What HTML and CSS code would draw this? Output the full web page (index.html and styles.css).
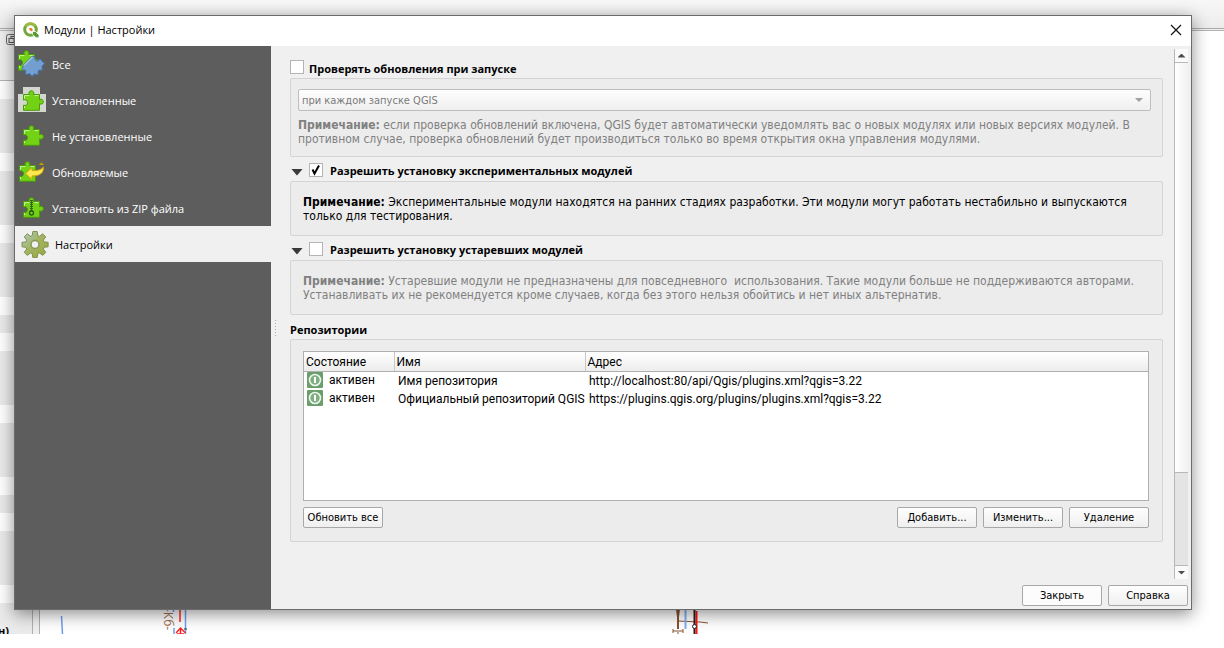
FILE: index.html
```
<!DOCTYPE html>
<html lang="ru">
<head>
<meta charset="utf-8">
<title>Модули | Настройки</title>
<link rel="stylesheet" href="styles.css">
</head>
<body>
<svg class="defs" width="0" height="0" aria-hidden="true">
  <defs>
    <linearGradient id="gear-fill" x1="0" y1="0" x2="1" y2="1">
      <stop offset="0" stop-color="#a9cbd6"/><stop offset=".45" stop-color="#a3b565"/><stop offset="1" stop-color="#96a53c"/>
    </linearGradient>
    <symbol id="puzzle" viewBox="0 0 22 22">
      <path d="M1.500 4.500H7.400C6.300 2.600 7.300.8 9.400.8s3.100 1.800 2 3.700h6.100v5.200c1.900-1.100 3.800-.2 3.800 2s-1.900 3.100-3.800 2v6.600H1.500v-5.200c2 1.100 4-.1 4-2.500s-2-3.600-4-2.500z" fill="#73d216" stroke="#4a9c08"/>
      <path d="M2.500 8.800V5.600h5M12.500 5.600h4M2.500 18v-1.800" fill="none" stroke="#c4f59a"/>
    </symbol>
  </defs>
</svg>

<div class="desktop" aria-hidden="true">
  <div class="desktop-toolbar"></div>
  <div class="desktop-body">
    <div class="side-dock">
      <div class="dock-head">
        <svg class="dock-float" width="12" height="12" viewBox="0 0 12 12"><rect x=".5" y=".5" width="12" height="10" rx="2" fill="#eee" stroke="#666"/><rect x="5" y="2.500" width="5" height="4" fill="none" stroke="#555"/><rect x="3" y="4.500" width="5" height="4" fill="#eee" stroke="#555"/></svg>
      </div>
      <div class="dock-rows">
        <i class="gap"></i><i class="tall"></i><i class="gap"></i><i class="tall"></i><i class="gap"></i><i class="tall"></i><i class="gap"></i><i></i><i class="gap"></i><i class="tall"></i><i class="gap"></i><i class="tall"></i><i class="gap"></i><i></i><i class="gap"></i><i class="tall"></i><i class="gap"></i>
        <b class="dock-label">н)</b>
      </div>
    </div>
    <div class="dock-splitter"></div>
    <div class="map">
      <svg class="map-lines" width="760" height="34" viewBox="0 0 760 34">
        <path d="M21.500 16l1 18M133.500 0v12M134 28v6M145.500 0v34" stroke="#6c9ff0" stroke-width="1.500"/>
        <path d="M140 0v22M136 33l4.500-5 5 5M140.500 28v6M137 34h7" stroke="#f22" stroke-width="1.500" fill="none"/>
        <path d="M137 9h4M144 29h3" stroke="#333"/>
        <path d="M636 9h4l-1 8v12h-2V17z" fill="#8a5230"/>
        <path d="M638 21l22 1 8 1M633 31h10M633 29v4M643 29v4M638 32v2" stroke="#8a5230" fill="none"/>
        <path d="M645.500 9v20" stroke="#7fb0f5" stroke-width="2"/>
        <path d="M654.500 9v25" stroke="#222" stroke-width="2"/><path d="M656.500 11v23" stroke="#f11" stroke-width="2"/>
        <circle cx="654.500" cy="26.500" r="2" fill="#fff" stroke="#222"/>
      </svg>
      <span class="map-label">-Кб-</span>
    </div>
  </div>
</div>

<main class="dialog">
  <header class="titlebar">
    <svg width="16" height="16" viewBox="0 0 16 16"><circle cx="7.500" cy="7.500" r="5.800" fill="none" stroke="#75a83c" stroke-width="3"/><path d="M2.500 4.500A6 6 0 0 1 12.500 4" fill="none" stroke="#a4bd3a" stroke-width="2"/><path d="M9.500 9.500h3l3.500 3.500V15.800h-3l-3.500-3.500z" fill="#5a9a33" stroke="#fff" stroke-width=".8"/><path d="M6 6h2.500l1.500 2-1.500 1.500L6.500 8z" fill="#ee7d22"/></svg>
    <h1>Модули | Настройки</h1>
    <button class="close" type="button" aria-label="Закрыть окно"><svg width="12" height="12" viewBox="0 0 12 12"><path d="M1 1l10 10M11 1L1 11" stroke="#111" stroke-width="1.200"/></svg></button>
  </header>

  <div class="panes">
    <nav class="menu">
      <button type="button" class="item"><svg width="28" height="28" viewBox="0 0 28 28"><use href="#puzzle" x="-1" y="0" width="22" height="22"/><path d="M5 15.500L14.500 6l2 1.200c1.200.8.3 2.200 1.300 3.300s2.400.6 3-.6l1.200-1.200 4.500 5-2 2c-1.400 1.300.8 3.300-.5 4.300s-2.300-.6-3.500.7c-1 1.300.5 3-.9 3.800-1.600.7-2-1-3.300-.5-1 .6-.7 2-2.300 2s-1.200-1.700-2.400-2.200c-1.300-.4-2.300 1.400-3.600.4s.4-2.400-.5-3.700-2.500.2-3.400-1 1.300-1.600.9-2.500z" fill="#729fcf" stroke="#3e6fae"/><path d="M6 15.500L14.500 7" stroke="#dceaf8"/></svg><span>Все</span></button>
      <button type="button" class="item"><svg width="28" height="28" viewBox="0 0 28 28"><path d="M5 1h17v7h6v18H0V8h5z" fill="#d3d7cf"/><use href="#puzzle" x="4" y="4" width="22" height="22"/></svg><span>Установленные</span></button>
      <button type="button" class="item"><svg width="28" height="28" viewBox="0 0 28 28"><use href="#puzzle" x="4" y="3" width="22" height="22"/></svg><span>Не установленные</span></button>
      <button type="button" class="item"><svg width="28" height="28" viewBox="0 0 28 28"><use href="#puzzle" x="0" y="3" width="22" height="22"/><path d="M7.500 15.500L14 9.500v3c5 .5 9-.5 11.500-3.500.2 6-3.500 9-11.500 9v3.500z" fill="#fce94f" stroke="#c9a408"/><path d="M21.500 7c0-2.500 4-2.500 4 0" fill="#c4a000" stroke="#b08c00"/></svg><span>Обновляемые</span></button>
      <button type="button" class="item"><svg width="28" height="28" viewBox="0 0 28 28"><use href="#puzzle" x="4" y="3" width="22" height="22"/><path d="M13.500 6v11" stroke="#37631a" stroke-width="3" stroke-dasharray="1 1"/><path d="M13.500 6v11" stroke="#37631a"/><circle cx="13.500" cy="19" r="2" fill="#73d216" stroke="#2e5b16" stroke-width="1.400"/></svg><span>Установить из ZIP файла</span></button>
      <button type="button" class="item current" aria-current="page"><svg width="28" height="28" viewBox="0 0 28 28"><path d="M11.800 1.500h4.400l.5 4 1.800.8 3.200-2.500 3.100 3.100-2.500 3.200.8 1.800 4 .4v4.500l-4 .5-.8 1.800 2.500 3.200-3.100 3.100-3.200-2.500-1.800.8-.5 3.900h-4.400l-.5-3.900-1.800-.8-3.200 2.500-3.100-3.100 2.500-3.200-.8-1.800-3.900-.5v-4.500l3.900-.4.8-1.800-2.500-3.200 3.100-3.100 3.200 2.500 1.800-.8z" fill="url(#gear-fill)" stroke="#84914b"/><circle cx="14" cy="14.500" r="4" fill="#f0f0f0" stroke="#8a9654" stroke-width="1.500"/></svg><span>Настройки</span></button>
    </nav>
    <div class="splitter"></div>

    <div class="content">
      <div class="view">
        <form class="settings">
          <section>
            <div class="head first"><input type="checkbox" id="updates"><label for="updates">Проверять обновления при запуске</label></div>
            <div class="group updates">
              <select aria-label="Частота проверки" disabled><option>при каждом запуске QGIS</option></select>
              <p class="note muted"><b>Примечание:</b> если проверка обновлений включена, QGIS будет автоматически уведомлять вас о новых модулях или новых версиях модулей. В противном случае, проверка обновлений будет производиться только во время открытия окна управления модулями.</p>
            </div>
          </section>
          <section>
            <div class="head"><button class="fold" type="button" aria-label="Свернуть"></button><input type="checkbox" id="experimental" checked><label for="experimental">Разрешить установку экспериментальных модулей</label></div>
            <div class="group info"><p class="note"><b>Примечание:</b> Экспериментальные модули находятся на ранних стадиях разработки. Эти модули могут работать нестабильно и выпускаются только для тестирования.</p></div>
          </section>
          <section>
            <div class="head"><button class="fold" type="button" aria-label="Свернуть"></button><input type="checkbox" id="deprecated"><label for="deprecated">Разрешить установку устаревших модулей</label></div>
            <div class="group info"><p class="note muted"><b>Примечание:</b> Устаревшие модули не предназначены для повседневного&nbsp; использования. Такие модули больше не поддерживаются авторами. Устанавливать их не рекомендуется кроме случаев, когда без этого нельзя обойтись и нет иных альтернатив.</p></div>
          </section>
          <section>
            <h2 class="head">Репозитории</h2>
            <div class="group repos">
              <div class="tree">
                <table>
                  <colgroup><col class="c-state"><col class="c-name"><col></colgroup>
                  <thead><tr><th>Состояние</th><th>Имя</th><th>Адрес</th></tr></thead>
                  <tbody>
                    <tr><td><span class="state"><svg width="16" height="16" viewBox="0 0 16 16"><rect width="16" height="16" rx="1" fill="#6a9f6c"/><circle cx="8" cy="8" r="5.500" fill="#7fae80" stroke="#eef5ee" stroke-width="1.600"/><path d="M8 5v6" stroke="#fff" stroke-width="2"/></svg>активен</span></td><td>Имя репозитория</td><td>http://localhost:80/api/Qgis/plugins.xml?qgis=3.22</td></tr>
                    <tr><td><span class="state"><svg width="16" height="16" viewBox="0 0 16 16"><rect width="16" height="16" rx="1" fill="#6a9f6c"/><circle cx="8" cy="8" r="5.500" fill="#7fae80" stroke="#eef5ee" stroke-width="1.600"/><path d="M8 5v6" stroke="#fff" stroke-width="2"/></svg>активен</span></td><td>Официальный репозиторий QGIS</td><td>https://plugins.qgis.org/plugins/plugins.xml?qgis=3.22</td></tr>
                  </tbody>
                </table>
              </div>
              <div class="actions"><button type="button" class="btn reload">Обновить все</button><button type="button" class="btn">Добавить...</button><button type="button" class="btn">Изменить...</button><button type="button" class="btn">Удаление</button></div>
            </div>
          </section>
        </form>
        <div class="scrollbar" aria-hidden="true"><div class="arrow up"></div><div class="thumb"></div><div class="track"></div><div class="arrow down"></div></div>
      </div>
      <footer class="footer"><button type="button" class="btn plain">Закрыть</button><button type="button" class="btn">Справка</button></footer>
    </div>
  </div>
</main>
</body>
</html>
```
FILE: styles.css
```
* { box-sizing: border-box; }
body {
  margin: 0;
  min-height: 100vh;
  padding: 15px 32px 38px 14px;
  display: flex;
  position: relative;
  overflow: hidden;
  background: #fff;
  color: #000;
  font: 11px/14px "Open Sans", "Noto Sans", sans-serif;
}
button, select, input { font: inherit; color: inherit; margin: 0; }
h1, h2, p { margin: 0; font: inherit; }
.defs { position: absolute; }

/* Main window behind the dialog */
.desktop {
  position: absolute;
  inset: 0 0 14px 0;
  display: flex;
  flex-direction: column;
}
.desktop-toolbar {
  height: 31px;
  flex: none;
  background: linear-gradient(#f7f7f7, #ececec 28px, #aaa 28px, #aaa 29px, #eee 29px, #eee 30px, #b4b4b4 30px);
}
.desktop-body { flex: 1; display: flex; min-height: 0; }
.side-dock { width: 32px; display: flex; flex-direction: column; background: #ebebeb; }
.dock-head { height: 50px; flex: none; padding: 3px 0 0 6px; border-bottom: 1px solid #b4b4b4; background: #efefef; }
.dock-float { display: block; }
.dock-rows { flex: 1; display: flex; flex-direction: column; overflow: hidden; }
.dock-rows i { height: 18px; flex: none; background: #ebebeb; }
.dock-rows .tall { height: 54px; }
.dock-rows .gap { background: #fff; }
.dock-label { padding-top: 21px; margin-left: -2px; white-space: nowrap; }
.dock-splitter { width: 8px; border: solid #b0b0b0; border-width: 0 1px; background: #efefef; }
.map { flex: 1; display: flex; align-items: flex-end; position: relative; }
.map-lines { display: block; }
.map-label {
  position: absolute;
  left: 122px;
  bottom: 0;
  height: 26px;
  writing-mode: vertical-rl;
  color: #a0694c;
  font-size: 12px;
  line-height: 12px;
}

/* Dialog window */
.dialog {
  flex: 1;
  min-width: 0;
  position: relative;
  display: flex;
  flex-direction: column;
  border: 1px solid #6b6b6b;
  background: #f0f0f0;
  box-shadow: 0 4px 16px rgba(0, 0, 0, .45);
}
.titlebar { height: 30px; padding: 0 9px 2px 8px; display: flex; align-items: center; gap: 5px; background: #fff; }
.titlebar h1 { flex: 1; }
.close { width: 12px; height: 12px; padding: 0; border: 0; background: none; }
.close svg { display: block; }
.panes { flex: 1; display: flex; }

.menu { width: 256px; flex: none; background: #5d5d5d; }
.item {
  width: 100%;
  height: 36px;
  padding: 0 3px;
  display: flex;
  align-items: center;
  gap: 6px;
  border: 0;
  background: none;
  color: #fff;
  text-align: left;
}
.item span { padding-top: 2px; }
.item.current { padding: 0 6px; background: #f0f0f0; color: #000; }
.splitter { width: 7px; flex: none; background: repeating-linear-gradient(#b0b0b0 0 1px, transparent 1px 3px) 4px 50% / 1px 16px no-repeat; }

.content { flex: 1; min-width: 0; display: flex; flex-direction: column; }
.view { flex: 1; display: flex; padding: 3px 3px 0 12px; }
.settings { flex: 1; min-width: 0; padding: 8px 11px 30px 0; }
.head { height: 24px; display: flex; align-items: center; font-weight: 700; padding-top: 2px; }
.head.first { height: 21px; padding: 0 0 2px; }
.head label { margin-left: 5px; padding-top: 2px; }
.head.first label { padding-top: 4px; }
.fold + input { margin-left: 4px; }
.fold ~ label { margin-left: 7px; }
.fold {
  width: 12px;
  height: 7px;
  margin: 4px 2px 0 1px;
  padding: 0;
  border: 0;
  background: #3a3a3a;
  clip-path: polygon(0 0, 100% 0, 50% 100%);
}
input[type="checkbox"] { appearance: none; width: 14px; height: 14px; flex: none; border: 1px solid #b4b4b4; background: #fff; }
input[type="checkbox"]:checked {
  background: #fff url("data:image/svg+xml,%3Csvg xmlns='http://www.w3.org/2000/svg' viewBox='0 0 12 12'%3E%3Cpath d='M2.500 5.500l2 4 4.500-8' fill='none' stroke='%23000' stroke-width='2'/%3E%3C/svg%3E");
}
.group { border: 1px solid #d4d4d4; border-radius: 2px; background: #ececec; }
.group.updates { padding: 10px 11px 10px 7px; }
select, .btn { font: 11px/14px "DejaVu Sans Condensed", "DejaVu Sans", sans-serif; }
select {
  appearance: none;
  display: block;
  width: 100%;
  height: 22px;
  padding: 2px 3px 0;
  border: 1px solid #bebebe;
  border-radius: 2px;
  background: url("data:image/svg+xml,%3Csvg xmlns='http://www.w3.org/2000/svg' viewBox='0 0 8 4'%3E%3Cpath d='M0 0h8L4 4z' fill='%23a0a0a0'/%3E%3C/svg%3E") right 7px center / 8px 4px no-repeat, linear-gradient(#fefefe, #efefef);
}
select:disabled { color: #7b7b7b; opacity: 1; }
.note { font: 12px/14px "DejaVu Sans Condensed", "DejaVu Sans", sans-serif; }
.updates .note { margin-top: 7px; }
.note.muted { color: #808080; }
.group.info { padding: 13px 12px 12px; }
h2.head { padding-top: 6px; }
.group.repos { padding: 11px 13px 13px 12px; }
.tree { height: 150px; border: 1px solid #b0b0b0; background: #fff; overflow: hidden; }
table { width: 100%; border-collapse: collapse; table-layout: fixed; font: 12px/14px Roboto, "Open Sans", sans-serif; }
.c-state { width: 90px; }
.c-name { width: 191px; }
th { height: 19px; padding: 2px 2px 0; border-bottom: 1px solid #b0b0b0; border-right: 1px solid #c8c8c8; background: linear-gradient(#fff, #ececec); font-weight: 400; text-align: left; }
th:last-child { border-right: 0; }
td { height: 18px; padding: 2px 0 0 4px; white-space: nowrap; }
td:first-child { padding: 0 0 0 3px; }
.state { display: flex; align-items: center; gap: 6px; }
.actions { margin-top: 6px; display: flex; gap: 6px; }
.btn {
  width: 80px;
  height: 21px;
  padding: 1px 0 0;
  border: 1px solid #a8a8a8;
  border-radius: 2px;
  background: linear-gradient(#fefefe, #efefef);
  white-space: nowrap;
}
.btn.plain { background: #fcfcfc; }
.reload { margin-right: auto; }

.scrollbar { width: 14px; flex: none; display: flex; flex-direction: column; border-left: 1px solid #b8b8b8; }
.arrow { height: 14px; display: grid; place-items: center; background: #fafafa; }
.up { border-bottom: 1px solid #b8b8b8; }
.down { border-top: 1px solid #b8b8b8; }
.arrow::after { content: ""; width: 8px; height: 4px; background: #4c4c4c; clip-path: polygon(50% 0, 100% 100%, 0 100%); }
.down::after { clip-path: polygon(0 0, 100% 0, 50% 100%); }
.thumb { flex: 410; background: linear-gradient(90deg, #fff, #f2f2f2); border-bottom: 1px solid #b8b8b8; }
.track { flex: 92; background: #e4e4e4; }
.footer { display: flex; justify-content: flex-end; gap: 6px; padding: 6px 3px 3px; }
```
